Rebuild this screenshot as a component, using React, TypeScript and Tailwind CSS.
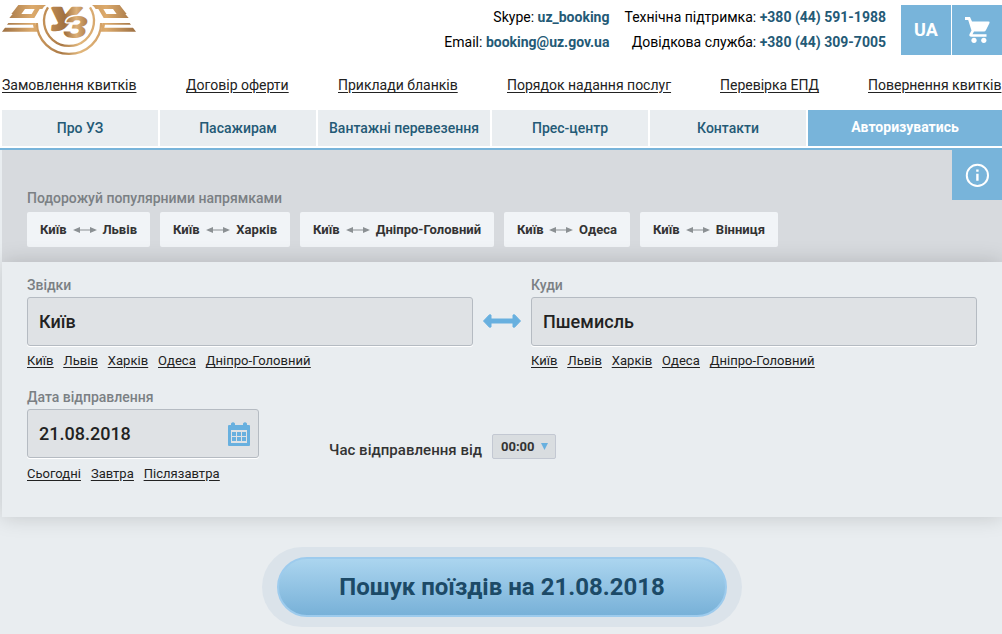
import React from 'react';

const links = [
  { t: 'Замовлення квитків', c: 'w-[184px]' },
  { t: 'Договір оферти', c: 'w-[152px]' },
  { t: 'Приклади бланків', c: 'w-[169px]' },
  { t: 'Порядок надання послуг', c: 'w-[213px]' },
  { t: 'Перевірка ЕПД', c: 'w-[148px]' },
  { t: 'Повернення квитків', c: 'w-[134px]' },
];

const tabs = [
  { t: 'Про УЗ', c: 'w-[156px]' },
  { t: 'Пасажирам', c: 'w-[156px]' },
  { t: 'Вантажні перевезення', c: 'w-[172px]' },
  { t: 'Прес-центр', c: 'w-[156px]' },
  { t: 'Контакти', c: 'w-[156px]' },
];

const routes = [
  { t: 'Львів', c: 'w-[123px]' },
  { t: 'Харків', c: 'w-[130px]' },
  { t: 'Дніпро-Головний', c: 'w-[194px]' },
  { t: 'Одеса', c: 'w-[126px]' },
  { t: 'Вінниця', c: 'w-[138px]' },
];

const cities = ['Київ', 'Львів', 'Харків', 'Одеса', 'Дніпро-Головний'];

function Wing() {
  return (
    <>
      <path d="M55 15H138Q131 20 127 27H119L103 54H28L38 42H95L104 27H75L64 42H34Z" />
      <path d="M25 69H107Q108 83 112 95H6L15 83H101L99 74H21Z" />
    </>
  );
}

function Logo() {
  return (
    <svg width="140" height="60" viewBox="0 0 420 180" className="shrink-0">
      <defs>
        <linearGradient id="gold" gradientUnits="userSpaceOnUse" x1="5" y1="0" x2="207" y2="0">
          <stop offset="0" stopColor="#9c6f42" />
          <stop offset="0.45" stopColor="#dcaa6c" />
          <stop offset="1" stopColor="#b9854c" />
        </linearGradient>
        <linearGradient id="ring" gradientUnits="userSpaceOnUse" x1="105" y1="0" x2="308" y2="0">
          <stop offset="0" stopColor="#cf9c60" />
          <stop offset="0.4" stopColor="#aa7945" />
          <stop offset="0.65" stopColor="#e2b87d" />
          <stop offset="1" stopColor="#d3a167" />
        </linearGradient>
        <linearGradient id="mono" gradientUnits="userSpaceOnUse" x1="148" y1="0" x2="264" y2="0">
          <stop offset="0" stopColor="#c08c52" />
          <stop offset="0.4" stopColor="#a07040" />
          <stop offset="0.7" stopColor="#dcb078" />
          <stop offset="1" stopColor="#ad7a46" />
        </linearGradient>
      </defs>
      <g fill="url(#gold)">
        <Wing />
        <g transform="translate(414 0) scale(-1 1)">
          <Wing />
        </g>
      </g>
      <g fill="none" stroke="url(#ring)">
        <path d="M110.5 69A96.5 92.5 0 0 0 303.5 69" strokeWidth="7" />
        <path d="M144 22A75 75 0 1 0 270 22" strokeWidth="7" />
      </g>
      <g fontFamily="'Roboto', sans-serif" fontWeight="900" fontStyle="italic" strokeLinejoin="round">
        <text x="148" y="90" fontSize="92" textLength="86" lengthAdjust="spacingAndGlyphs" fill="url(#mono)" stroke="url(#mono)" strokeWidth="7">У</text>
        <text x="190" y="114" fontSize="92" textLength="74" lengthAdjust="spacingAndGlyphs" fill="url(#mono)" stroke="white" strokeWidth="8" paintOrder="stroke">З</text>
      </g>
    </svg>
  );
}

function Contact({ label, value }: { label: string; value: string }) {
  return (
    <div>
      {label} <b className="font-bold text-[#245a76]">{value}</b>
    </div>
  );
}

function CityLinks({ items }: { items: string[] }) {
  return (
    <div className="flex h-[18px] gap-[10px] text-[13px] leading-[18px] tracking-[0.02px] text-[#222] underline underline-offset-2">
      {items.map((c) => (
        <a key={c} href="#">{c}</a>
      ))}
    </div>
  );
}

function RouteArrow() {
  return (
    <svg width="24" height="8" viewBox="0 0 24 8" fill="#8b9093">
      <path d="M0 4L7 1V3.4H17V1L24 4L17 7V4.6H7V7Z" />
    </svg>
  );
}

function Station({ label, value }: { label: string; value: string }) {
  return (
    <div className="w-[446px]">
      <div className="h-[23px] text-[14px] font-medium leading-[23px] text-[#7b8084]">{label}</div>
      <div className="mb-[6px] flex h-[49px] items-center rounded-[3px] border border-[#b5bbc2] bg-[#dfe2e5] px-[11px] text-[18px] font-medium tracking-[0.05px] text-[#222] shadow-[0_1px_0_#fff]">
        {value}
      </div>
      <CityLinks items={cities} />
    </div>
  );
}

export default function App() {
  return (
    <div className="h-[634px] w-[1002px] overflow-hidden bg-white font-['Roboto',sans-serif] text-[14px] text-[#222]">
      <header className="flex h-[72px] items-start">
        <Logo />
        <div className="ml-auto flex pt-[5px] text-right leading-[25px] text-black">
          <div className="mr-[15px]">
            <Contact label="Skype:" value="uz_booking" />
            <Contact label="Email:" value="booking@uz.gov.ua" />
          </div>
          <div className="mr-[15px]">
            <Contact label="Технічна підтримка:" value="+380 (44) 591-1988" />
            <Contact label="Довідкова служба:" value="+380 (44) 309-7005" />
          </div>
        </div>
        <div className="mt-[5px] flex gap-px">
          <div className="flex size-[50px] items-center justify-center bg-[#78b4da] pb-[2px] text-[18px] font-bold text-white">UA</div>
          <div className="flex size-[50px] items-center justify-center bg-[#78b4da]">
            <svg width="25" height="26" viewBox="0 0 25 26" fill="white">
              <path d="M0 0H5L7 4.6H23.5Q25 4.6 24.5 6L21 13Q20.3 14.5 19 14.5H9L7.5 17.2H21.5V19.8H6.5Q3.5 19.5 4.6 17L6.5 13.5L3.2 3H0Z" />
              <circle cx="9" cy="23.3" r="2.6" />
              <circle cx="18.8" cy="23.3" r="2.6" />
            </svg>
          </div>
        </div>
      </header>

      <div className="flex h-[38px] whitespace-nowrap pl-[2px] leading-[27px] underline underline-offset-2">
        {links.map((l) => (
          <div key={l.t} className={l.c + ' shrink-0'}>
            <a href="#">{l.t}</a>
          </div>
        ))}
      </div>

      <nav className="flex h-[36px] gap-[2px] pl-[2px] text-[14px] font-medium text-[#245a76]">
        {tabs.map((n) => (
          <div key={n.t} className={n.c + ' flex items-center justify-center bg-[#e9edf0]'}>{n.t}</div>
        ))}
        <div className="flex flex-1 items-center justify-center bg-[#78b4da] pb-[2px] font-bold text-white">Авторизуватись</div>
      </nav>
      <div className="mt-[2px] h-[2px] bg-[#78b4da]" />

      <main className="h-[484px] bg-[#e9edf0] pl-[2px]">
        <section className="flex h-[112px] justify-between bg-[#d7dade]">
          <div className="pl-[25px] pt-[38px]">
            <div className="h-[24px] text-[14px] font-medium leading-[21px] text-[#7b8084]">Подорожуй популярними напрямками</div>
            <div className="flex gap-[10px] text-[13px] font-bold text-[#333]">
              {routes.map((r) => (
                <div key={r.t} className={r.c + ' flex h-[35px] items-center justify-between rounded-[2px] bg-[#f1f4f7] px-[13px]'}>
                  <span>Київ</span>
                  <RouteArrow />
                  <span>{r.t}</span>
                </div>
              ))}
            </div>
          </div>
          <div className="flex size-[50px] items-center justify-center bg-[#78b4da]">
            <svg width="24" height="24" viewBox="0 0 24 24" fill="none" stroke="white">
              <circle cx="12.4" cy="12.4" r="10.6" strokeWidth="2" />
              <path d="M12.4 6.6V8.8M12.4 10.8V17.8" strokeWidth="2.4" />
            </svg>
          </div>
        </section>

        <section className="relative h-[255px] bg-[#e9edf0] px-[25px] pt-[12px] shadow-[0_0_20px_rgba(0,0,0,0.17)]">
          <div className="flex">
            <Station label="Звідки" value="Київ" />
            <div className="flex w-[58px] justify-center pt-[40px]">
              <svg width="38" height="14" viewBox="0 0 38 14" fill="#68b0df" stroke="#68b0df" strokeWidth="1" strokeLinejoin="round">
                <path d="M.5 7L6.5 .7L8 1V5H30V1L31.5 .7L37.5 7L31.5 13.3L30 13V9H8V13L6.5 13.3Z" />
              </svg>
            </div>
            <Station label="Куди" value="Пшемисль" />
          </div>
          <div className="mt-[16px] flex">
            <div className="w-[232px]">
              <div className="h-[23px] text-[14px] font-medium leading-[22px] text-[#7b8084]">Дата відправлення</div>
              <div className="mb-[7px] flex h-[49px] items-center justify-between rounded-[3px] border border-[#b5bbc2] bg-[#dfe2e5] pl-[11px] pr-[8px] text-[18px] font-medium shadow-[0_1px_0_#fff]">
                <span>21.08.2018</span>
                <svg width="22" height="24" viewBox="0 0 22 24" fill="#68b0df">
                  <path fillRule="evenodd" d="M1 3H3V1.5Q5 -1 7 1.5V3H15V1.5Q17 -1 19 1.5V3H21Q22 3 22 4V23Q22 24 21 24H1Q0 24 0 23V4Q0 3 1 3ZM3 8V21H19V8Z" />
                  <path d="M4 10H8V14H4ZM9 10H13V14H9ZM14 10H18V14H14ZM4 15H8V19H4ZM9 15H13V19H9ZM14 15H18V19H14Z" />
                </svg>
              </div>
              <CityLinks items={['Сьогодні', 'Завтра', 'Післязавтра']} />
            </div>
            <div className="ml-[70px] flex pt-[48px]">
              <div className="h-[26px] w-[153px] whitespace-nowrap text-[15px] font-medium leading-[33px] tracking-[0.03px] text-[#333]">Час відправлення від</div>
              <div className="ml-[10px] flex h-[25px] w-[64px] items-center justify-between rounded-[2px] border border-[#c3c8d2] bg-[#d9dde0] pl-[8px] pr-[7px] text-[13px] font-bold text-[#333]">
                <span>00:00</span>
                <svg width="7" height="7" viewBox="0 0 7 7" fill="#68b0df"><path d="M0 0H7L3.5 7Z" /></svg>
              </div>
            </div>
          </div>
        </section>

        <div className="ml-[260px] mt-[30px] h-[80px] w-[480px] rounded-full bg-[#dbe3ea] p-[10px] px-[15px]">
          <button className="h-[60px] w-[450px] rounded-full border-2 border-[#9dcbed] bg-linear-to-b from-[#abd5ef] to-[#78b1d8] text-[24px] font-bold text-[#1c4a67]">
            Пошук поїздів на 21.08.2018
          </button>
        </div>
      </main>
    </div>
  );
}
